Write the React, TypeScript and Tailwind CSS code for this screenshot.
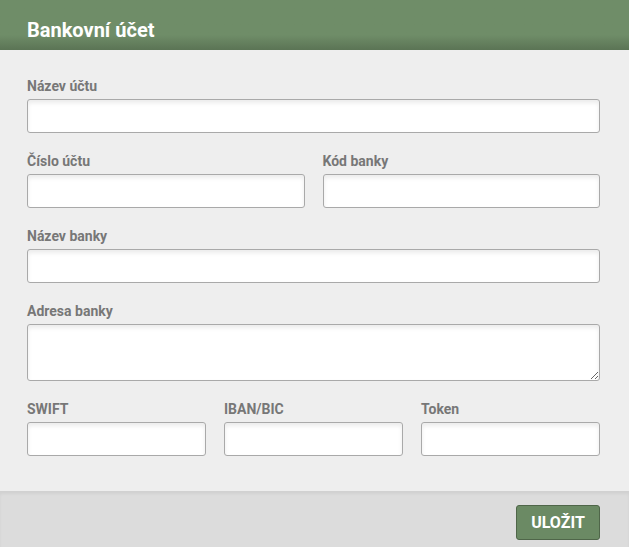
import type { ReactNode } from "react"

const inputCls =
  "block h-[34px] w-full rounded-[3px] border border-[#a9a9a9] bg-white shadow-[inset_0_3px_4px_rgba(0,0,0,0.08)] outline-none"

function Field({ label, children }: { label: string; children: ReactNode }) {
  return (
    <label className="flex flex-col">
      <span className="mb-[3px] pt-[2px] text-[14px] leading-[20px] font-bold text-[#777777]">
        {label}
      </span>
      {children}
    </label>
  )
}

export default function App() {
  return (
    <div className="flex h-[547px] w-[629px] flex-col bg-[#eeeeee] font-['Roboto',sans-serif]">
      <header className="flex h-[50px] items-center bg-gradient-to-b from-[#6f8d68] from-70% to-[#5b7455] px-[27px]">
        <h1 className="pt-[10px] text-[20px] font-bold text-white">Bankovní účet</h1>
      </header>

      <form className="flex flex-1 flex-col gap-[16px] pt-[24px] pr-[29px] pl-[27px]">
        <Field label="Název účtu">
          <input className={inputCls} />
        </Field>
        <div className="grid grid-cols-2 gap-[18px]">
          <Field label="Číslo účtu">
            <input className={inputCls} />
          </Field>
          <Field label="Kód banky">
            <input className={inputCls} />
          </Field>
        </div>
        <Field label="Název banky">
          <input className={inputCls} />
        </Field>
        <Field label="Adresa banky">
          <textarea className={inputCls + " h-[57px] resize-y"} />
        </Field>
        <div className="grid grid-cols-3 gap-[18px]">
          <Field label="SWIFT">
            <input className={inputCls} />
          </Field>
          <Field label="IBAN/BIC">
            <input className={inputCls} />
          </Field>
          <Field label="Token">
            <input className={inputCls} />
          </Field>
        </div>
      </form>

      <footer className="flex h-[56px] items-start justify-end bg-[#dcdcdc] px-[29px] pt-[14px] shadow-[inset_0_3px_3px_rgba(0,0,0,0.05)]">
        <button
          type="button"
          className="h-[35px] w-[84px] rounded-[3px] border border-[#4f6649] bg-[#6b8a64] text-[16px] font-bold text-white"
        >
          ULOŽIT
        </button>
      </footer>
    </div>
  )
}
